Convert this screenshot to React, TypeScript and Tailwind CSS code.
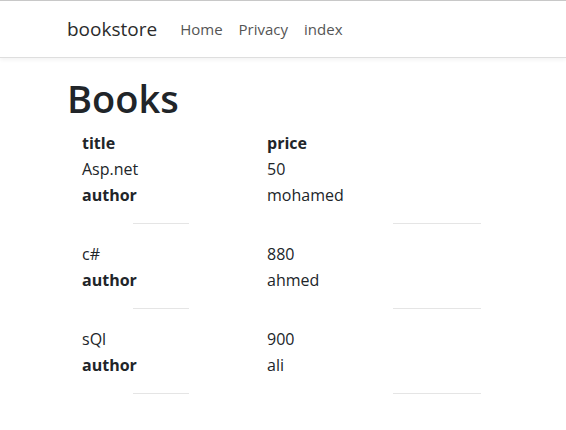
const books = [
  { title: 'Asp.net', price: '50', author: 'mohamed', withHeader: true },
  { title: 'c#', price: '880', author: 'ahmed', withHeader: false },
  { title: 'sQl', price: '900', author: 'ali', withHeader: false },
]

function Divider() {
  return (
    <div className="flex h-[1px] mt-[15px] mb-[17px]">
      <div className="ml-[66px] w-[56px] bg-[#e5e5e5]" />
      <div className="ml-[204px] w-[88px] bg-[#e5e5e5]" />
    </div>
  )
}

function BookRow({ title, price, author, withHeader }: (typeof books)[number]) {
  return (
    <div className="pl-[15px]">
      {withHeader && (
        <div className="grid grid-cols-[185px_1fr] font-bold h-[26px] items-center">
          <span>title</span>
          <span>price</span>
        </div>
      )}
      <div className="grid grid-cols-[185px_1fr] h-[26px] items-center">
        <span>{title}</span>
        <span>{price}</span>
      </div>
      <div className="grid grid-cols-[185px_1fr] h-[26px] items-center">
        <span className="font-bold">author</span>
        <span>{author}</span>
      </div>
    </div>
  )
}

export default function App() {
  return (
    <div
      className="min-h-[430px] bg-white text-[#212529] text-base"
      style={{ fontFamily: '"Open Sans", "Noto Sans", sans-serif' }}
    >
      <header className="border-t border-[#c8c8c8] border-b border-b-[#dedede] shadow-[0_2px_4px_rgba(0,0,0,0.05)]">
        <nav className="flex items-center h-[56px] pl-[67px]">
          <span className="text-[19px] text-[#2b2b2b] mr-[23px]">bookstore</span>
          <ul className="flex gap-[16px] text-[15px] text-[#555]">
            <li>Home</li>
            <li>Privacy</li>
            <li>index</li>
          </ul>
        </nav>
      </header>
      <main className="pl-[67px] pt-[18px]">
        <h1 className="text-[38px] font-semibold leading-[1.2] mb-[8px]">Books</h1>
        {books.map((b) => (
          <div key={b.title}>
            <BookRow {...b} />
            <Divider />
          </div>
        ))}
      </main>
    </div>
  )
}
